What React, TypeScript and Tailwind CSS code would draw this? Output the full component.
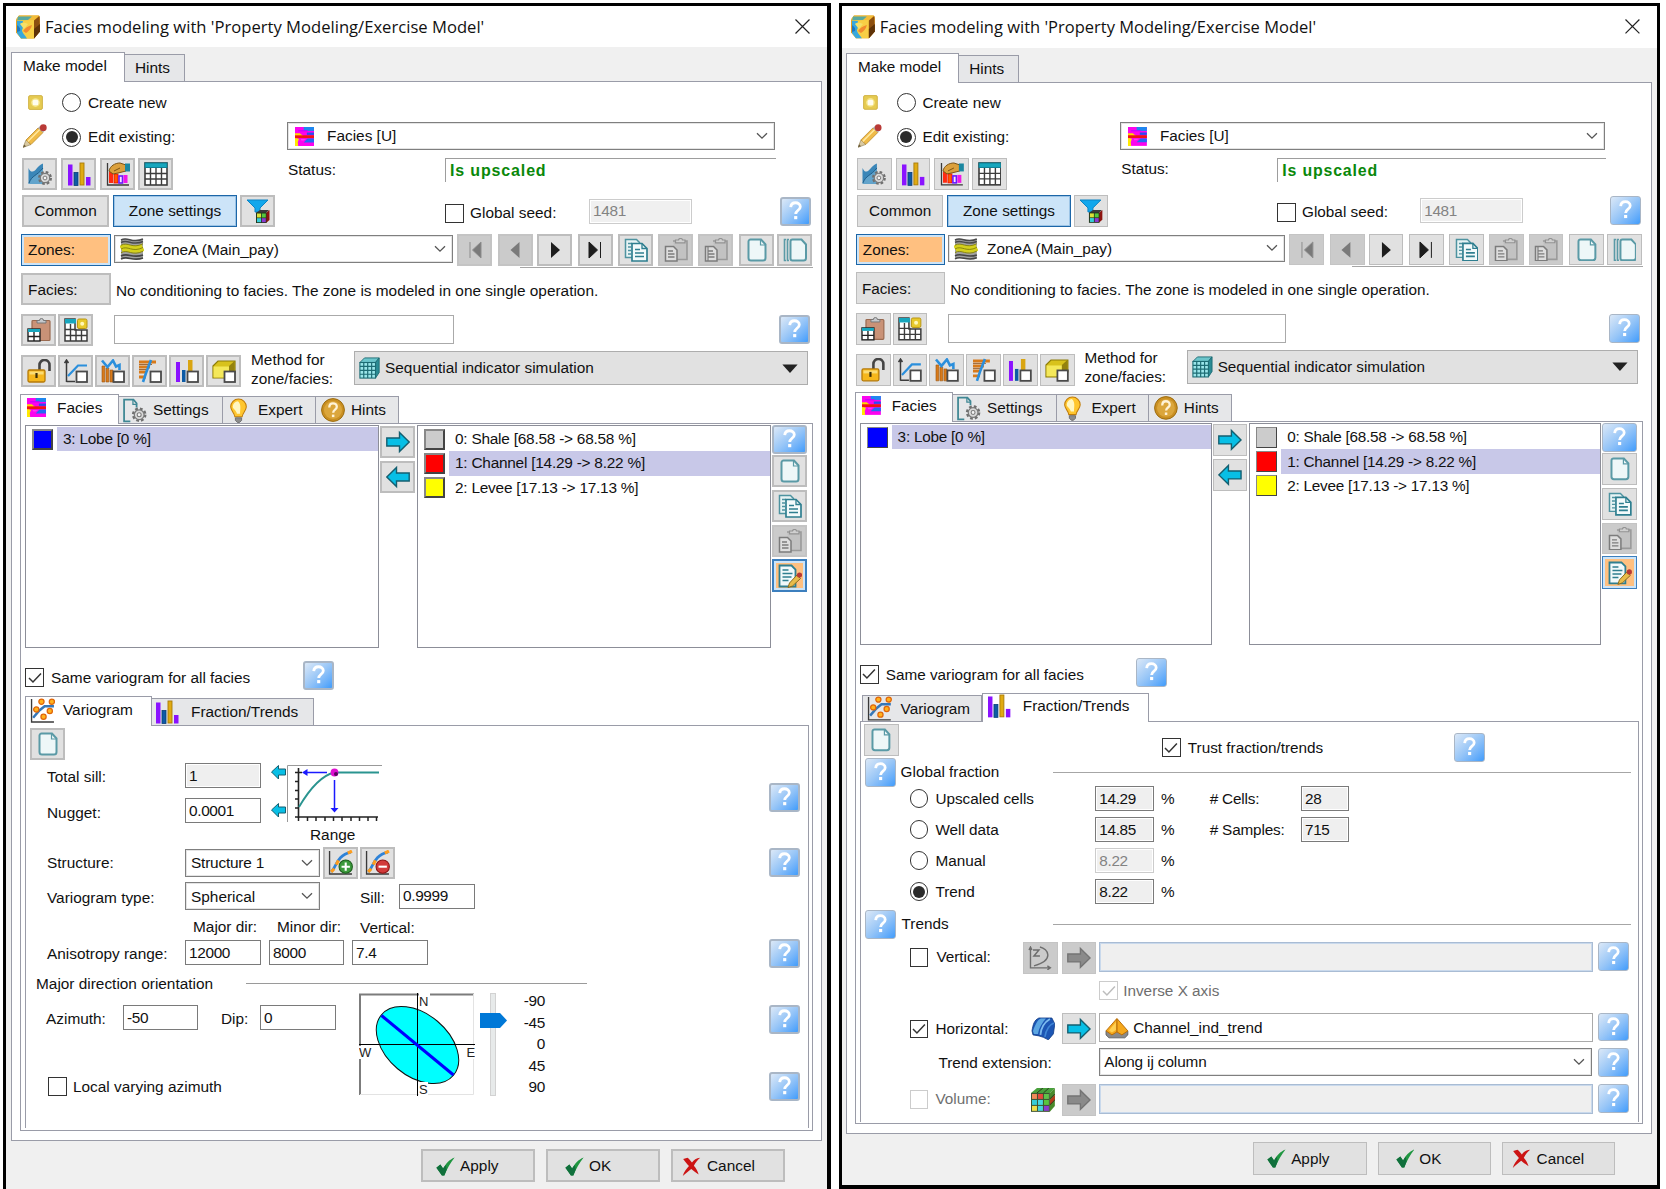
import React from "react";
import type { ReactNode } from "react";

type Kids = { children?: ReactNode; className?: string };

/* ---------- basic controls ---------- */

const Row = ({ children, className = "" }: Kids) => (
  <div className={`flex *:shrink-0 ${className}`}>{children}</div>
);

const Btn = ({ children, className = "", off = false }: Kids & { off?: boolean }) => (
  <button
    className={`flex h-8 w-[35px] items-center justify-center border-2 ${
      off ? "border-[#c4c4c4] bg-[#cbcbcb]" : "border-[#bdbdbd] bg-[#e1e1e1]"
    } ${className}`}
  >
    {children}
  </button>
);

const Help = ({ className = "" }: { className?: string }) => (
  <button
    className={`flex h-[29px] w-[31px] items-center justify-center rounded-[3px] border-2 border-[#a9b6c6] bg-linear-to-br from-[#dbe8f7] via-[#98c6f7] to-[#3f9cfb] ${className}`}
  >
    <svg viewBox="0 0 24 24" className="h-[25px] w-[25px]">
      <path d="M7.4 7.8C7.600 5.2 9.500 3.600 12 3.600s4.600 1.400 4.600 3.800c0 3.400-4.400 3.400-4.400 7" fill="none" stroke="#fff" strokeWidth="2.700" />
      <rect x="10.700" y="16.400" width="3" height="3" fill="#fff" />
    </svg>
  </button>
);

const Chevron = () => (
  <svg viewBox="0 0 12 8" className="h-2 w-3">
    <path d="M1 1.2 6 6.2 11 1.2" fill="none" stroke="#555" strokeWidth="1.3" />
  </svg>
);

const Combo = ({ children, className = "" }: Kids) => (
  <div className={`flex h-7 items-center border border-[#7f7f7f] bg-white pr-[6px] shadow-[inset_0_0_0_1px_#e4e4e4] ${className}`}>
    <div className="flex flex-1 items-center">{children}</div>
    <Chevron />
  </div>
);

const Field = ({ children, className = "", tone = "on" }: Kids & { tone?: "on" | "read" | "off" }) => (
  <div
    className={`flex h-[25px] items-center border pl-[3px] tracking-[-0.35px] ${
      tone === "on"
        ? "border-[#7a7a7a] bg-white"
        : tone === "read"
          ? "border-[#7a7a7a] bg-[#efefef] shadow-[inset_0_0_0_1px_#fff]"
          : "border-[#cccccc] bg-[#f0f0f0] text-[#838383] shadow-[inset_0_0_0_1px_#fff]"
    } ${className}`}
  >
    {children}
  </div>
);

const Check = ({ on = false, off = false, className = "" }: { on?: boolean; off?: boolean; className?: string }) => (
  <span
    className={`flex h-[19px] w-[19px] items-center justify-center border bg-white ${off ? "border-[#cccccc]" : "border-[#333]"} ${className}`}
  >
    {on && (
      <svg viewBox="0 0 16 16" className="h-4 w-4">
        <path d="M2 8 6 12 14 3.6" fill="none" stroke={off ? "#bdbdbd" : "#333"} strokeWidth="1.5" />
      </svg>
    )}
  </span>
);

const Radio = ({ on = false, className = "" }: { on?: boolean; className?: string }) => (
  <span className={`flex h-[19px] w-[19px] items-center justify-center rounded-full border border-[#333] bg-white ${className}`}>
    {on && <span className="h-[12px] w-[12px] rounded-full bg-[#2b2b2b]" />}
  </span>
);

/* ---------- icons ---------- */

const Ico = ({ children, className = "h-6 w-6" }: Kids) => (
  <svg viewBox="0 0 24 24" className={className}>
    {children}
  </svg>
);

const AppIcon = () => (
  <Ico>
    <path d="M0 4.500 3 .5h20l1 2v14l-6 7H5l-5-6Z" fill="#e8a020" />
    <path d="M0 4.500 3 .5h20l-5 5-16 1.500Z" fill="#f2bd3a" />
    <path d="M2 1.500h14l-4 3.500-11 1Z" fill="#58a8a0" />
    <path d="M1 5.500 18 5v18.500H5l-4-5.500Z" fill="#f8cf45" />
    <path d="M1 6h6c-1 4 1 6-1 9 0 3 3 5 5 8.500H5l-4-5.500Z" fill="#38a8dc" />
    <path d="M1 10c2 2 4 3 3 6l-3 1Z" fill="#1f78c0" />
    <path d="M4 9c3-2 5-1 8 0l-4 5Z" fill="#f5e06a" />
    <path d="M7 16c2-3 5-5 9-6-1 4-3 6-6 8Z" fill="#f28a30" />
    <path d="M18 5.500 23.500 1l.5 15.500-6 7Z" fill="#8c4f10" />
    <path d="M18 14l6-5v7.500l-6 7Z" fill="#5e3208" />
  </Ico>
);

const NewStar = () => (
  <Ico className="h-[15px] w-[15px]">
    <rect x="1" y="1" width="22" height="22" rx="2" fill="#e6cb52" stroke="#cfb040" strokeWidth="1.5" />
    <circle cx="12" cy="12" r="7" fill="#f6e68c" />
    <rect x="7.500" y="7.500" width="9" height="9" rx="2.500" fill="#fffdf0" />
  </Ico>
);

const Pencil = () => (
  <Ico>
    <path d="M0 23.500 3 16 8 20.500Z" fill="#d9c9a0" stroke="#8a7a50" strokeWidth=".6" />
    <path d="M0 23.500 1.200 20.500 3 22.300Z" fill="#6a5a38" />
    <path d="M3 16 15 4l5 4.500L8 20.500Z" fill="#f0bb48" stroke="#b98a2c" strokeWidth=".8" />
    <path d="M4.800 17.500 16.800 5.500" stroke="#ffe9a0" strokeWidth="1.500" />
    <path d="M15 4 17 2l5 4.500-2 2Z" fill="#b0a8a8" />
    <circle cx="20.300" cy="3.700" r="3.400" fill="#b93a36" />
  </Ico>
);

const FaciesIcon = () => (
  <Ico className="h-[19px] w-[21px]">
    <rect x="0" y="0" width="24" height="24" fill="#fb04ee" />
    <path d="M11 0h13v5H11Z" fill="#1e86f0" />
    <path d="M4 4h12v1.500H4Z" fill="#c400ff" />
    <path d="M15 7h9v3h-9Z" fill="#2a4cf0" />
    <path d="M0 8h6l4 3v3H5l-5 2Z" fill="#ffd800" />
    <path d="M0 10.500h24v3.500H0Z" fill="#f01414" />
    <path d="M24 14.500v5H11l3-3 2-2Z" fill="#2468f4" />
    <path d="M0 15h5l-1.500 4L4 24H0Z" fill="#ffea00" />
    <path d="M7 15h7l-3 2H8Z" fill="#ff3cf4" />
  </Ico>
);

const GearShape = ({ cx, cy, fill = "#d9d9d9" }: { cx: number; cy: number; fill?: string }) => (
  <>
    <circle cx={cx} cy={cy} r="5.800" fill="none" stroke="#6f6f6f" strokeWidth="2.400" strokeDasharray="2.600 1.955" />
    <circle cx={cx} cy={cy} r="4.700" fill={fill} stroke="#7a7a7a" strokeWidth="1.200" />
    <circle cx={cx} cy={cy} r="1.900" fill="#f4f4f4" stroke="#7a7a7a" strokeWidth="1" />
  </>
);

const SurfaceGear = () => (
  <Ico>
    <path d="M.5 6C2 9 3 10 5 9.500 8 9 9 4 15 1.500V22H.5Z" fill="#3a86b8" />
    <path d="M1 21C4 13 9 14 15 6v16H1Z" fill="#62a4cc" />
    <path d="M1 21C4 13 9 14 15 6" fill="none" stroke="#1d5c88" strokeWidth="1" />
    <GearShape cx={17} cy={16} />
  </Ico>
);

const Bars = ({ className = "h-6 w-6" }: { className?: string }) => (
  <Ico className={className}>
    <rect x="1" y="2.500" width="4.500" height="21" fill="#8a12ff" />
    <rect x="7" y="10.500" width="4" height="13" fill="#0d5ba5" stroke="#0a3c78" strokeWidth=".8" />
    <rect x="13" y="1" width="4" height="22" fill="#e0ab12" stroke="#a87a08" strokeWidth=".9" />
    <rect x="19" y="15" width="4.500" height="8.500" fill="#8a12ff" />
  </Ico>
);

const HandChart = () => (
  <Ico>
    <path d="M1.500 1v22H23" fill="none" stroke="#3a3a3a" strokeWidth="1.300" />
    <path d="M3 10 7 8v13H3Z" fill="#ff2a12" />
    <rect x="8" y="12" width="4" height="9" fill="#ff5a00" stroke="#e00" strokeWidth=".8" />
    <rect x="13" y="14" width="3.500" height="7" fill="#f4ebff" stroke="#6a18ff" strokeWidth="1.600" />
    <rect x="17.500" y="13" width="4" height="8" fill="#f016e8" />
    <path d="M3 9C4 4 9 1 14 1l6 2v6l-8 2-5 1Z" fill="#dba03c" stroke="#7a5214" strokeWidth="1" />
    <path d="M8 9l6-3" stroke="#7a5214" />
    <path d="M19 1.500h5v8h-5Z" fill="#1b87a0" />
  </Ico>
);

const TableIcon = () => (
  <Ico>
    <rect x="1" y="1" width="22" height="22" fill="#fff" stroke="#3c3c3c" strokeWidth="1.600" />
    <rect x="1" y="1" width="22" height="4.500" fill="#17a6bd" stroke="#0d7f94" strokeWidth="1" />
    <path d="M6.500 6v17M12 6v17M17.500 6v17M1 11.500h22M1 17h22" stroke="#3c3c3c" strokeWidth="1.400" />
  </Ico>
);

const Cube = () => (
  <Ico>
    <path d="M0 5 6 0h18l-5 5Z" fill="#49a03c" />
    <path d="M19 5 24 0v18l-5 6Z" fill="#4a8a2c" />
    <path d="M19 12l5-5v5l-5 5.500Z" fill="#b83a1c" />
    <rect x="0" y="5" width="19" height="19" fill="#3c5230" />
    <rect x="1" y="6" width="5" height="5" fill="#ef8a5a" />
    <rect x="7" y="6" width="5" height="5" fill="#e24a3c" />
    <rect x="13" y="6" width="5" height="5" fill="#5fc24a" />
    <rect x="1" y="12" width="5" height="5" fill="#35cdd8" />
    <rect x="7" y="12" width="5" height="5" fill="#48d6de" />
    <rect x="13" y="12" width="5" height="5" fill="#58c440" />
    <rect x="1" y="18" width="5" height="5" fill="#efe04a" />
    <rect x="7" y="18" width="5" height="5" fill="#45d4dc" />
    <rect x="13" y="18" width="5" height="5" fill="#8a3ad0" />
    <path d="M6 5 12 0M12.500 5 18 0M19 11l5-5M19 17l5-5" stroke="#2c3a20" strokeWidth="1" />
  </Ico>
);

const FilterCube = () => (
  <Ico>
    <path d="M1 1h21l-8 8v4h-5V9Z" fill="#12a7ec" stroke="#0b83c4" strokeWidth="1" />
    <path d="M10 14 14 11h9l-3 3Z" fill="#3a3a3a" />
    <path d="M20 14 23.500 11v10L20 24Z" fill="#8d1410" />
    <rect x="10" y="13.500" width="10.500" height="10.500" fill="#23361c" />
    <rect x="11" y="14.500" width="4" height="4" fill="#d9e23a" />
    <rect x="15.800" y="14.500" width="4" height="4" fill="#55c73c" />
    <rect x="11" y="19.200" width="4" height="4" fill="#35cdd8" />
    <rect x="15.800" y="19.200" width="4" height="4" fill="#8a3ad0" />
  </Ico>
);

const ZoneIcon = () => (
  <Ico>
    <path d="M1 3c7-4 11 4 22-1v19c-11 4-15-3-22 1Z" fill="#a0a0a0" />
    <path d="M1 3c7-4 11 4 22-1M1 5.500c7-4 11 4 22-1" fill="none" stroke="#4a4a4a" strokeWidth="1.500" />
    <path d="M1 12c7-4 11 4 22-1.500" fill="none" stroke="#d4d01c" strokeWidth="7" />
    <path d="M1 8.300c7-4 11 4 22-1.500M1 12c7-4 11 4 22-1.500M1 15.700c7-4 11 4 22-1.500" fill="none" stroke="#8a860c" strokeWidth="1" />
    <path d="M1 22c7-4 11 3 22-1M1 19c7-4 11 3 22-1" fill="none" stroke="#444" strokeWidth="1.600" />
  </Ico>
);

const Nav = ({ kind, off = false }: { kind: "first" | "prev" | "next" | "last"; off?: boolean }) => {
  const c = off ? "#7a7a7a" : "#1d1d1d";
  return (
    <Ico>
      {kind === "first" && <path d="M7 4v16M18 4v16L9.500 12Z" fill={c} stroke={off ? "#8d8d8d" : c} strokeWidth="1" />}
      {kind === "prev" && <path d="M15.500 4v16L6.500 12Z" fill={c} />}
      {kind === "next" && <path d="M8 4v16L17 12Z" fill={c} />}
      {kind === "last" && <path d="M5 4v16L13.500 12ZM16.500 4v16" fill={c} stroke={c} strokeWidth="1" />}
    </Ico>
  );
};

const Page = () => (
  <Ico>
    <path d="M3.500 3.500a2 2 0 0 1 2-2H16l4.500 5V20a2.500 2.500 0 0 1-2.500 2.500H6A2.500 2.500 0 0 1 3.500 20Z" fill="#eef7f8" stroke="#5a9aa6" strokeWidth="2" />
    <path d="M15.500 2v5h5" fill="none" stroke="#5a9aa6" strokeWidth="1.200" />
  </Ico>
);
const Pages = () => (
  <Ico>
    <path d="M3 1.500H1.500v21H3M6 1.500H4.500v21H6" fill="none" stroke="#5a9aa6" strokeWidth="1.600" />
    <path d="M7.500 3.500a2 2 0 0 1 2-2h9l4.500 5V20a2.500 2.500 0 0 1-2.500 2.500h-11a2 2 0 0 1-2-2Z" fill="#eef7f8" stroke="#5a9aa6" strokeWidth="2" />
  </Ico>
);
const Copy = () => (
  <Ico>
    <path d="M1.500 1.500h11l3 3v15h-14Z" fill="#e7f3f4" stroke="#4e93a0" strokeWidth="1.500" />
    <path d="M4 5.500h4M4 9h3M4 12.500h3M4 16h3" stroke="#4e93a0" strokeWidth="1.400" />
    <path d="M8 5.500h10l5 5V23H8Z" fill="#f3fafb" stroke="#2f7f90" strokeWidth="1.700" />
    <path d="M18 5.500v5h5" fill="none" stroke="#2f7f90" strokeWidth="1.300" />
    <path d="M11 11.500h5M11 15h9M11 18.500h9" stroke="#2f7f90" strokeWidth="1.600" />
  </Ico>
);
const PasteOff = ({ double = false }: { double?: boolean }) => (
  <Ico>
    <path d="M9 3h14v18.500H13" fill="#c2c2c2" stroke="#9a9a9a" strokeWidth="1.600" />
    <path d="M11.500 4.800V2H14.500a2 1.500 0 0 1 4 0h2.500v2.800Z" fill="#d0d0d0" stroke="#929292" strokeWidth="1.200" />
    <path d="M1.500 8.500h8l3.500 3.500v11H1.500Z" fill="#dedede" stroke="#7c7c7c" strokeWidth="1.500" />
    <path d="M4 13h5M4 16h6.500M4 19h6.500" stroke="#7c7c7c" strokeWidth="1.400" />
    {double && <path d="M4 8.500V23" stroke="#7c7c7c" strokeWidth="1.200" />}
  </Ico>
);
const EditPage = () => (
  <Ico>
    <path d="M1.500 1.500h12l4 4v17h-16Z" fill="#f1f9fa" stroke="#2f7f90" strokeWidth="1.800" />
    <path d="M4.500 6h6M4.500 9.500h10M4.500 13h9M4.500 16.500h6" stroke="#2f7f90" strokeWidth="1.500" />
    <path d="M10 23.500 11.500 19 19 11l3.500 3.500L14.500 22Z" fill="#e8bc4a" stroke="#8a6a1c" strokeWidth="1" />
    <circle cx="21.500" cy="11" r="2.600" fill="#b93a34" />
  </Ico>
);
const PasteTable = () => (
  <Ico>
    <rect x="5" y="2.500" width="18" height="20" rx="1" fill="#c99277" stroke="#9a6a50" strokeWidth="1.200" />
    <path d="M10 5V2.500h2.500a2 2 0 0 1 4 0H19V5Z" fill="#c5c8cc" stroke="#777" strokeWidth="1" />
    <rect x="1" y="11" width="12" height="12" fill="#fff" stroke="#222" strokeWidth="1.400" />
    <rect x="1" y="11" width="12" height="3" fill="#17a6bd" />
    <path d="M7 14v9M1 18.500h12" stroke="#222" strokeWidth="1.400" />
  </Ico>
);
const TableNew = () => (
  <Ico>
    <path d="M1 1h10v11h12v11H1Z" fill="#fff" stroke="#3c3c3c" strokeWidth="1.500" />
    <rect x="1" y="1" width="11" height="4.500" fill="#17a6bd" />
    <path d="M6.500 6v17M12 11v12M17.500 12v11M1 11.500h11M1 17.500h22" stroke="#3c3c3c" strokeWidth="1.400" />
    <rect x="13.500" y="1" width="9.500" height="9.500" rx="1.500" fill="#e8c92c" stroke="#b89614" strokeWidth="1" />
    <circle cx="18.200" cy="5.700" r="2" fill="#fff7b8" />
  </Ico>
);
const Lock = () => (
  <Ico>
    <path d="M12.500 11V6a5 5 0 0 1 10 0v6" fill="none" stroke="#444" strokeWidth="2.600" />
    <rect x="1" y="11" width="17" height="12" rx="1.500" fill="#f6b71c" stroke="#b57a08" strokeWidth="1.300" />
    <rect x="2.500" y="12.500" width="14" height="3" fill="#fbdc74" />
    <path d="M9.500 14v5" stroke="#3a2c08" strokeWidth="2.200" />
  </Ico>
);
const Box = () => <rect x="12.500" y="12.500" width="10.500" height="10.500" fill="#fff" stroke="#4a4a4a" strokeWidth="1.800" />;
const CurveBox = () => (
  <Ico>
    <path d="M2.500 23V2M.5 4 2.500 1 4.500 4M2.500 22.500H11" fill="none" stroke="#3c3c3c" strokeWidth="1.500" />
    <path d="M4 17 14 6.500h9" fill="none" stroke="#2b8fdc" strokeWidth="2.200" />
    <Box />
  </Ico>
);
const HistBox = () => (
  <Ico>
    <path d="M1 7h2.800v16H1zM5 9h2.800v14H5zM9 11h3v12H9z" fill="#d87a1a" stroke="#9c5410" strokeWidth=".6" />
    <path d="M1 1.500 6.500 8 12 1.500 15 7.500 18.500 6v5" fill="none" stroke="#2b8fdc" strokeWidth="2.600" />
    <Box />
  </Ico>
);
const TrendBox = () => (
  <Ico>
    <path d="M1 1.500h17v3H1zM1 6.500h11v3H1zM1 11.500h8v3H1zM1 16.500h7v3H1z" fill="#d87a1a" />
    <path d="M1 5.500h13M1 10.500h9" stroke="#8c4a10" strokeWidth=".8" />
    <path d="M5 23 8 14 13 1" fill="none" stroke="#2b8fdc" strokeWidth="2.600" />
    <Box />
  </Ico>
);
const BarsBox = () => (
  <Ico>
    <rect x="1" y="3" width="4" height="20" fill="#8a12ff" />
    <rect x="7" y="11" width="3.500" height="12" fill="#0d5ba5" />
    <rect x="13" y="1" width="4.500" height="12" fill="#d9a512" />
    <Box />
  </Ico>
);
const VolBox = () => (
  <Ico>
    <path d="M1 7 6 2h17v12l-5 5H1Z" fill="#d8c21c" stroke="#8d7c08" strokeWidth="1.200" />
    <path d="M1.500 7.500h15.500v11H1.500Z" fill="#f4e85a" />
    <path d="M17 7 22.500 2v12l-5.500 5Z" fill="#94820e" />
    <Box />
  </Ico>
);
const SimCube = () => (
  <Ico className="h-[22px] w-[22px]">
    <path d="M1 6 6 1h16l-4 5Z" fill="#6cc5cb" stroke="#1d6c74" />
    <path d="M18 6 22 1v16l-4 6Z" fill="#2b8b94" stroke="#1d6c74" />
    <rect x="1" y="6" width="17" height="17" fill="#9be6ea" stroke="#1d6c74" strokeWidth="1.200" />
    <path d="M5.200 6v17M9.500 6v17M13.800 6v17M1 10.200h17M1 14.500h17M1 18.800h17" stroke="#1d6c74" strokeWidth="1.300" />
  </Ico>
);
const SettingsIcon = () => (
  <Ico className="h-[25px] w-[25px]">
    <path d="M8 22.500H2v-21h9l3 3.500v4" fill="none" stroke="#3f8794" strokeWidth="1.700" />
    <path d="M10.500 1.500V6h4" fill="none" stroke="#3f8794" strokeWidth="1.200" />
    <GearShape cx={16.500} cy={16} />
  </Ico>
);
const Bulb = () => (
  <Ico className="h-[25px] w-[25px]">
    <path d="M12 1a7.500 7.500 0 0 0-7.500 7.500C4.500 12 8 14 8.500 18h7c.5-4 4-6 4-9.500A7.500 7.500 0 0 0 12 1Z" fill="#ffc62e" stroke="#c07c0a" strokeWidth="1" />
    <path d="M11.500 3a5.500 5.500 0 0 0-5 5.500c0 2 3 3 4 6.500h3c0-4 1.500-9-2-12Z" fill="#fff6c2" />
    <path d="M9 19h6v2.500L13 23.500h-2L9 21.500Z" fill="#8c8c8c" stroke="#5c5c5c" strokeWidth=".7" />
  </Ico>
);
const HintIcon = () => (
  <Ico>
    <circle cx="12" cy="12" r="11.400" fill="#c98f22" stroke="#9c6c10" strokeWidth="1" />
    <circle cx="12" cy="12" r="9" fill="#dba63c" />
    <path d="M8.300 9.500C8.300 6.800 10 5.300 12 5.300s3.800 1.300 3.800 3.500c0 2.900-3.600 2.700-3.600 5.900" fill="none" stroke="#fff3d8" strokeWidth="2.300" />
    <rect x="10.900" y="16.600" width="2.500" height="2.500" fill="#fff3d8" />
  </Ico>
);
const Arrow = ({ left = false, off = false }: { left?: boolean; off?: boolean }) => (
  <Ico>
    <path
      d={left ? "M.8 12 10.500 2.500V8h12.700v8H10.500v5.500Z" : "M23.200 12 13.500 2.500V8H.8v8h12.700v5.500Z"}
      fill={off ? "#8a8a8a" : "#08bfe6"}
      stroke={off ? "#747474" : "#145f70"}
      strokeWidth="1.400"
    />
  </Ico>
);
const VarioIcon = () => (
  <Ico className="h-[25px] w-[25px]">
    <path d="M1.500 1v22H23" fill="none" stroke="#3a3a3a" strokeWidth="1.300" />
    <path d="M3 19 9 12 14 8h9" fill="none" stroke="#3577b8" strokeWidth="2.400" />
    {[
      [11, 3.500],
      [21, 3.500],
      [6, 11],
      [19, 12.500],
      [13, 18],
    ].map(([x, y]) => (
      <circle key={`${x}-${y}`} cx={x} cy={y} r="2.500" fill="#ffb21c" stroke="#e0650a" strokeWidth="1.200" />
    ))}
  </Ico>
);
const StructIcon = ({ minus = false }: { minus?: boolean }) => (
  <Ico className="h-[25px] w-[25px]">
    <path d="M1.500 1v22H23" fill="none" stroke="#3a3a3a" strokeWidth="1.300" />
    <path d="M3 21C8 17 8 5 22 2" fill="none" stroke="#2f83d8" strokeWidth="2.600" />
    <path d="M3 21l3-3M8 14l2-4M19 3l4-2" stroke="#ff9d1c" strokeWidth="3" />
    <circle cx="17" cy="16" r="6.400" fill={minus ? "#d23a3a" : "#3c9a3c"} stroke={minus ? "#8c1414" : "#1c5c1c"} strokeWidth="1" />
    <path d={minus ? "M13 16h8" : "M13 16h8M17 12v8"} stroke="#fff" strokeWidth="2" />
  </Ico>
);
const ZCurve = () => (
  <Ico>
    <path d="M2.500 2v20H22M19.500 20l3 2-3 2M1 4l1.500-3L4 4" fill="none" stroke="#6e6e6e" strokeWidth="1.400" />
    <path d="M5 4h6L6 10h6" fill="none" stroke="#6e6e6e" strokeWidth="1.500" />
    <path d="M12 1c4 1 8 4 8 8 0 5-7 9-14 11" fill="none" stroke="#6e6e6e" strokeWidth="1.400" />
  </Ico>
);
const SurfBlue = () => (
  <Ico>
    <path d="M1 14C2 8 3 3 8 1h13l3 6-1.500 10-5 6-5-2.500L8 19l-6-1Z" fill="#1c56b4" stroke="#123c84" strokeWidth=".8" />
    <path d="M2 14C4 9 6 3 10 1.500h5C11 6 8 11 7 17l-4 0Z" fill="#5ca6e2" />
    <path d="M9.500 18C10 11 14 5 19 2" fill="none" stroke="#7ebcf0" strokeWidth="1.800" />
    <path d="M14 20C15 14 18 8 23 6" fill="none" stroke="#3f86d6" strokeWidth="1.600" />
  </Ico>
);
const TrendCone = () => (
  <Ico>
    <path d="M1 15h22v4l-3 3H4l-3-3Z" fill="#8a8a8a" stroke="#555" strokeWidth=".8" />
    <path d="M12 2.500 1 15l6 4 5-3 5 3 6-4Z" fill="#f5a81c" stroke="#b86e08" strokeWidth="1" />
    <path d="M12 3v13" stroke="#b86e08" strokeWidth="1.200" />
    <path d="M11 6 4 14.500l3 2 4-2.500Z" fill="#ffd052" />
  </Ico>
);
const Tick = () => (
  <Ico className="h-[19px] w-[19px]">
    <path d="M.5 13.500 5.500 9.500 9 14.500C12 8.500 17 3 23.500.5 18.500 7 14 14.500 10.500 23.500H7.500Z" fill="#1f9640" />
    <path d="M.5 13.500 5.500 9.500 9 14.500c1-1.500 2-3 3.500-4.500l1 6-3 7.500H7.500Z" fill="#106f3c" />
  </Ico>
);
const Cross = () => (
  <Ico className="h-[19px] w-[19px]">
    <path d="M1.500 2.500 7 1c2.300 1.800 3.800 3.800 5.600 6C15 3.500 18 1.500 23 1c-3.500 3-6 6.500-8 10 3 3.500 5 7 6 11-3.500-2.500-6.500-4.500-9.300-7C8.500 17.500 5 20.500 1 24 2.500 19 5.500 15 8.800 11.500 6.300 8.500 4 6 1.500 2.500Z" fill="#cc1414" />
  </Ico>
);

/* ---------- shared blocks ---------- */

const Tab = ({ on = false, className = "", children }: Kids & { on?: boolean }) => (
  <div
    className={`flex items-center border border-b-0 border-[#9a9ca8] ${
      on ? "relative z-10 -mb-px h-[30px] bg-white" : "-ml-px h-[27px] bg-[#e6e7e9]"
    } ${className}`}
  >
    {children}
  </div>
);

const Swatch = ({ className }: { className: string }) => (
  <span className={`h-[21px] w-[21px] border-2 border-t-[#888] border-l-[#888] border-r-[#444] border-b-[#444] ${className}`} />
);

const Item = ({ children, color, on = false }: { children: ReactNode; color: string; on?: boolean }) => (
  <Row className="h-[24.3px] items-center">
    <Swatch className={color} />
    <span className={`ml-1 flex h-full w-[321px] items-center pl-[6px] tracking-[-0.23px] ${on ? "bg-[#c8c8e8]" : ""}`}>{children}</span>
  </Row>
);

const VariogramPanel = () => (
  <div className="ml-1 h-[403px] w-[784px] border border-b-0 border-[#9a9ca8]">
    <Row className="pt-[2px] pl-1">
      <Btn>
        <Page />
      </Btn>
    </Row>
    <Row>
      <div className="w-[743px]">
        <Row className="h-16">
          <div className="w-[159px] pl-[21px]">
            <div className="flex h-[33px] items-center">Total sill:</div>
            <div className="flex h-10 items-center">Nugget:</div>
          </div>
          <div className="w-[76px] pt-[3px]">
            <Field tone="read">1</Field>
            <Field className="mt-[10px]">0.0001</Field>
          </div>
          <svg viewBox="270 763 114 60" className="mt-[3px] ml-[9px] h-[60px] w-[114px]">
            <path d="M287.500 822V765.500H382" fill="none" stroke="#999" />
            <path d="M298.500 768v50M295 817h83M295 772.500h7M295 781.500h4M295 790.500h4M295 799h4M295 808h4" stroke="#222" strokeWidth="1.600" />
            <path d="M307.500 817v4M316 817v4M325 817v4M333.500 817v4M342 817v4M351 817v4M359.500 817v4M368 817v4M376.500 817v4M298.500 817v4" stroke="#222" strokeWidth="1.500" />
            <path d="M299 807C309 790 320 776 334 772.500H379" fill="none" stroke="#2a9490" strokeWidth="1.900" />
            <path d="M327 772.500H305M334.500 780v28" stroke="#1a1aff" strokeWidth="1.500" />
            <path d="M302 772.500 307.500 769v7ZM334.500 812.500 330.500 808h8Z" fill="#1a1aff" />
            <circle cx="334.500" cy="772.500" r="3.900" fill="#e010d0" />
            <circle cx="336" cy="774" r="2" fill="#5a0460" />
            <path d="M271.500 772 278.500 765.500v3.500h7v6h-7v4ZM271.500 810 278.500 803.500v3.500h7v6h-7v4Z" fill="#08bfe6" stroke="#145f70" />
          </svg>
        </Row>
        <div className="flex h-[22px] items-center pl-[284px]">Range</div>
        <Row className="h-[33px] items-center">
          <span className="w-[159px] pl-[21px]">Structure:</span>
          <Combo className="w-[135px] pl-[5px] tracking-[-0.2px]">Structure 1</Combo>
          <Btn className="ml-[3px]">
            <StructIcon />
          </Btn>
          <Btn className="ml-[2px]">
            <StructIcon minus />
          </Btn>
        </Row>
        <Row className="mt-[3px] h-7 items-center">
          <span className="w-[159px] pt-[3px] pl-[21px]">Variogram type:</span>
          <Combo className="w-[135px] pl-[5px]">
            <span className="pt-px">Spherical</span>
          </Combo>
          <span className="ml-[40px] w-[39px] pt-[3px]">Sill:</span>
          <Field className="w-[76px]">0.9999</Field>
        </Row>
        <Row className="mt-[5px] h-6 items-center">
          <span className="ml-[167px] w-[84px]">Major dir:</span>
          <span className="w-[83px]">Minor dir:</span>
          <span className="pt-[2px]">Vertical:</span>
        </Row>
        <Row className="mt-px h-[25px] items-center">
          <span className="w-[159px] pt-[2px] pl-[21px]">Anisotropy range:</span>
          <Field className="w-[76px]">12000</Field>
          <Field className="ml-[8px] w-[75px]">8000</Field>
          <Field className="ml-[8px] w-[76px]">7.4</Field>
        </Row>
        <Row className="mt-[9px] h-[19px] items-center">
          <span className="ml-[10px] w-[210px] pt-px">Major direction orientation</span>
          <span className="h-px w-[341px] bg-[#9a9a9a]" />
        </Row>
        <Row className="h-[104px]">
          <div className="w-[333px]">
            <Row className="mt-[12px] h-[25px] items-center">
              <span className="ml-[20px] w-[77px] pt-[2px]">Azimuth:</span>
              <Field className="w-[75px]">-50</Field>
              <span className="ml-[23px] w-[39px] pt-[2px]">Dip:</span>
              <Field className="w-[76px]">0</Field>
            </Row>
            <Row className="mt-[47px] h-[19px] items-center">
              <Check className="ml-[22px]" />
              <span className="ml-[6px] pt-px">Local varying azimuth</span>
            </Row>
          </div>
          <svg viewBox="359 993 116 103" className="h-[103px] w-[116px]">
            <path d="M360 1095V994.500H474" fill="none" stroke="#7c7c7c" strokeWidth="2" />
            <path d="M360 1094.500H473.500V994" fill="none" stroke="#e3e3e3" />
            <ellipse cx="417.500" cy="1045" rx="47" ry="31" transform="rotate(40 417.500 1045)" fill="#00ffff" stroke="#111" />
            <path d="M417.500 993v103M359 1044.500h116" stroke="#000" />
            <path d="M381.500 1015.500 453.500 1075" stroke="#0000ff" strokeWidth="3" />
            <path d="M419 993h11v13h-11zM359 1046h12v13h-12zM466 1046h9v13h-9zM419 1082h9v13h-9z" fill="#fff" />
            <g fontSize="13" fontFamily="Liberation Sans, Arial, sans-serif" fill="#222">
              <text x="419" y="1006">N</text>
              <text x="359" y="1057">W</text>
              <text x="466.500" y="1057">E</text>
              <text x="419" y="1094">S</text>
            </g>
          </svg>
          <svg viewBox="480 993 27 103" className="ml-[5px] h-[103px] w-[27px]">
            <rect x="490.500" y="993.500" width="5" height="102" fill="#e7eaea" stroke="#d2d2d2" />
            <path d="M480 1013h20l7 7.500-7 7.500h-20Z" fill="#0078d7" />
          </svg>
          <div className="-mt-[3px] w-[38px] text-right tracking-[-0.3px]">
            {["-90", "-45", "0", "45", "90"].map((t) => (
              <div key={t} className="h-[21.5px] leading-[21.5px]">
                {t}
              </div>
            ))}
          </div>
        </Row>
      </div>
      <div className="w-[31px]">
        <Help className="mt-[23px]" />
        <Help className="mt-[36px]" />
        <Help className="mt-[62px]" />
        <Help className="mt-[37px]" />
        <Help className="mt-[38px]" />
      </div>
    </Row>
  </div>
);

const Fraction = ({ label, value, on, off, extra }: { label: string; value: string; on?: boolean; off?: boolean; extra?: [string, string] }) => (
  <Row className="h-[31.3px] items-center">
    <Radio on={on} className="ml-[49px]" />
    <span className="ml-[7px] w-[161px]">{label}</span>
    <Field tone={off ? "off" : "read"} className="w-[59px]">
      {value}
    </Field>
    <span className="ml-[7px] w-[49px]">%</span>
    {extra && (
      <>
        <span className="w-[92px] tracking-[-0.15px]">{extra[0]}</span>
        <Field tone="read" className="w-[48px]">
          {extra[1]}
        </Field>
      </>
    )}
  </Row>
);

const blueField = "h-[30px] w-[497px] border border-[#a9bcd4] bg-[#efefef] shadow-[inset_0_0_0_1px_#c9d9ec]";

const TrendsPanel = () => (
  <div className="ml-1 h-[403px] w-[784px] border border-b-0 border-[#9a9ca8]">
    <Row className="h-[34px] pt-[2px]">
      <Btn className="ml-[3px]">
        <Page />
      </Btn>
      <Check on className="mt-[14px] ml-[265px]" />
      <span className="mt-[13px] ml-[7px] w-[268px]">Trust fraction/trends</span>
      <Help className="mt-[9px]" />
    </Row>
    <Row className="mt-[2px] h-[25px]">
      <Help className="ml-1" />
      <span className="ml-[5px] w-[153px] pt-[3px]">Global fraction</span>
      <span className="mt-[14px] h-px w-[582px] bg-[#a6a6a6]" />
    </Row>
    <Fraction label="Upscaled cells" value="14.29" extra={["# Cells:", "28"]} />
    <Fraction label="Well data" value="14.85" extra={["# Samples:", "715"]} />
    <Fraction label="Manual" value="8.22" off />
    <Fraction label="Trend" value="8.22" on />
    <Row className="mt-[3px] h-[29px]">
      <Help className="ml-1" />
      <span className="ml-[6px] w-[152px] pt-[3px]">Trends</span>
      <span className="mt-[14px] h-px w-[582px] bg-[#a6a6a6]" />
    </Row>
    <Row className="mt-[3px] h-8">
      <Check className="mt-[6px] ml-[49px]" />
      <span className="mt-[4px] ml-2 w-[87px]">Vertical:</span>
      <Btn off>
        <ZCurve />
      </Btn>
      <Btn off className="ml-1">
        <Arrow off />
      </Btn>
      <div className={`ml-[3px] ${blueField}`} />
      <Help className="ml-[5px]" />
    </Row>
    <Row className="h-[34px] items-center text-[#6e6e6e]">
      <Check on off className="ml-[240px]" />
      <span className="ml-[5px]">Inverse X axis</span>
    </Row>
    <Row className="mt-[5px] h-8">
      <Check on className="mt-[7px] ml-[49px]" />
      <span className="mt-[5px] ml-[7px] w-[88px]">Horizontal:</span>
      <span className="flex w-[39px] items-center pl-[8px]">
        <SurfBlue />
      </span>
      <Btn>
        <Arrow />
      </Btn>
      <div className="ml-[3px] flex h-[30px] w-[497px] items-center border border-[#aaaaaa] bg-white pl-[5px]">
        <TrendCone />
        <span className="ml-[4px] pt-px">Channel_ind_trend</span>
      </div>
      <Help className="ml-[5px]" />
    </Row>
    <Row className="mt-1 h-[29px]">
      <span className="mt-[4px] ml-[78px] w-[162px]">Trend extension:</span>
      <Combo className="w-[496px] pl-1 tracking-[-0.1px]">Along ij column</Combo>
      <Help className="ml-[6px]" />
    </Row>
    <Row className="mt-[7px] h-8">
      <Check off className="mt-[6px] ml-[49px]" />
      <span className="mt-[4px] ml-[7px] w-[88px] text-[#6e6e6e]">Volume:</span>
      <span className="flex w-[39px] items-center pl-[8px]">
        <Cube />
      </span>
      <Btn off>
        <Arrow off />
      </Btn>
      <div className={`ml-[3px] ${blueField}`} />
      <Help className="ml-[5px]" />
    </Row>
  </div>
);

const Dialog = ({ second = false }: { second?: boolean }) => (
  <div className={second ? "[zoom:0.9938]" : ""}>
    <Row className={`items-center bg-white ${second ? "h-[42px] pl-[9px]" : "h-[41px] pl-[10px]"}`}>
      <AppIcon />
      <span className="ml-[5px] w-[750px] font-['Open_Sans','Noto_Sans',sans-serif] text-[16.6px] tracking-[0.01px] text-[#111]">
        Facies modeling with &#39;Property Modeling/Exercise Model&#39;
      </span>
      <svg viewBox="0 0 15 15" className="h-[15px] w-[15px]">
        <path d="M.5.5l14 14M14.500.5l-14 14" stroke="#222" strokeWidth="1.200" />
      </svg>
    </Row>
    <div className={second ? "pl-[4px]" : "pl-[5px]"}>
      <Row className="h-[34px] items-end pt-[5px]">
        <Tab on className="w-[114px] pb-[3px] pl-[11px]">
          Make model
        </Tab>
        <Tab className="w-[61px] pl-[10px]">Hints</Tab>
      </Row>
      <div className={`w-[811px] border border-[#9a9ca8] bg-white ${second ? "h-[1059px]" : "h-[1060px]"}`}>
        <Row className="h-10 items-center">
          <span className="ml-4">
            <NewStar />
          </span>
          <Radio className="ml-[19px]" />
          <span className="ml-[7px] pt-px">Create new</span>
        </Row>
        <Row className="h-7 items-center">
          <span className="ml-[11px]">
            <Pencil />
          </span>
          <Radio on className="mt-[2px] ml-[15px]" />
          <span className="ml-[7px] w-[199px] pt-[2px]">Edit existing:</span>
          <Combo className="w-[488px] pl-[6px]">
            <FaciesIcon />
            <span className="ml-[12px]">Facies [U]</span>
          </Combo>
        </Row>
        <Row className="mt-2 h-8">
          <Btn className="ml-[10px]">
            <SurfaceGear />
          </Btn>
          <Btn className="ml-[4px]">
            <Bars />
          </Btn>
          <Btn className="ml-[4px]">
            <HandChart />
          </Btn>
          <Btn className="ml-[3px]">
            <TableIcon />
          </Btn>
          <span className="ml-[115px] w-[157px] leading-[23px]">Status:</span>
          <span className="flex h-[24px] w-[331px] items-center border-t border-l border-[#9d9d9d] pl-1 text-[16px] font-bold tracking-[0.85px] text-[#0a880a]">
            Is upscaled
          </span>
        </Row>
        <Row className="mt-[5px] h-8 items-center">
          <Btn className="ml-[10px] w-[87px]">Common</Btn>
          <button className="ml-1 h-8 w-[124px] border border-[#1c66a8] bg-[#cce4f8] shadow-[inset_0_0_0_1px_#9cc4e6]">Zone settings</button>
          <Btn className="ml-[3px]">
            <FilterCube />
          </Btn>
          <Check className="mt-[4px] ml-[170px]" />
          <span className="mt-[3px] ml-[6px] w-[119px]">Global seed:</span>
          <Field tone="off" className="w-[103px]">
            1481
          </Field>
          <Help className="ml-[88px]" />
        </Row>
        <Row className="mt-[7px] h-8">
          <button className="ml-[9px] h-8 w-[90px] border border-[#1c66a8] bg-[#ffc080] pl-[6px] text-left shadow-[inset_0_0_0_2px_#cce4f8]">Zones:</button>
          <Combo className="mt-px ml-[3px] w-[339px] pl-[5px]">
            <ZoneIcon />
            <span className="ml-[9px] pt-px">ZoneA (Main_pay)</span>
          </Combo>
          <Btn off className="ml-1">
            <Nav kind="first" off />
          </Btn>
          <Btn off className="ml-[6px]">
            <Nav kind="prev" off />
          </Btn>
          <Btn className="ml-1">
            <Nav kind="next" />
          </Btn>
          <Btn className="ml-[6px]">
            <Nav kind="last" />
          </Btn>
          <Btn className="ml-[5px]">
            <Copy />
          </Btn>
          <Btn off className="ml-[5px]">
            <PasteOff />
          </Btn>
          <Btn off className="ml-[5px]">
            <PasteOff double />
          </Btn>
          <Btn className="ml-[6px]">
            <Page />
          </Btn>
          <Btn className="ml-[3px]">
            <Pages />
          </Btn>
        </Row>
        <div className="mt-px ml-[508px] h-px w-[293px] bg-[#a6a6a6]" />
        <Row className="mt-[5px] h-8 items-center">
          <Btn className="ml-[9px] w-[90px] justify-start pt-[2px] pl-[5px]">Facies:</Btn>
          <span className="ml-[5px] pt-[3px]">No conditioning to facies. The zone is modeled in one single operation.</span>
        </Row>
        <Row className="mt-[9px] h-8">
          <Btn className="ml-[9px]">
            <PasteTable />
          </Btn>
          <Btn className="ml-[2px]">
            <TableNew />
          </Btn>
          <div className="mt-px ml-[21px] h-[29px] w-[340px] border border-[#aaaaaa]" />
          <Help className="mt-px ml-[325px]" />
        </Row>
        <Row className="mt-[5px] h-9">
          <Row className="ml-[9px] w-[230px] items-end gap-[2px]">
            <Btn>
              <Lock />
            </Btn>
            <Btn>
              <CurveBox />
            </Btn>
            <Btn>
              <HistBox />
            </Btn>
            <Btn>
              <TrendBox />
            </Btn>
            <Btn>
              <BarsBox />
            </Btn>
            <Btn>
              <VolBox />
            </Btn>
          </Row>
          <span className="-mt-px w-[103px] leading-[19px]">
            Method for
            <br />
            zone/facies:
          </span>
          <button className="flex h-[34px] w-[454px] items-center border border-[#adadad] bg-[#e1e1e1] pr-[9px] pl-1">
            <SimCube />
            <span className="ml-1 flex-1 text-left">Sequential indicator simulation</span>
            <svg viewBox="0 0 17 10" className="h-[9px] w-[16px]">
              <path d="M0 .5h17L8.500 10Z" fill="#222" />
            </svg>
          </button>
        </Row>

        <Row className="mt-[7px] ml-2 h-[29px] items-end">
          <Tab on className="w-[99px] pb-1 pl-[5px]">
            <FaciesIcon />
            <span className="ml-[10px]">Facies</span>
          </Tab>
          <Tab className="w-[105px] pl-[3px]">
            <SettingsIcon />
            <span className="ml-[6px]">Settings</span>
          </Tab>
          <Tab className="w-[94px] pl-[3px]">
            <Bulb />
            <span className="ml-[7px]">Expert</span>
          </Tab>
          <Tab className="w-[84px] pl-[5px]">
            <HintIcon />
            <span className="ml-[6px]">Hints</span>
          </Tab>
        </Row>
        <div className={`ml-2 w-[793px] border border-[#9a9ca8] pt-px ${second ? "h-[707px]" : "h-[708px]"}`}>
          <Row className="h-[222px]">
            <div className="ml-1 h-[223px] w-[354px] border border-[#8c8e98] pt-px pl-[6px]">
              <Item color="bg-[#0000ff]" on>
                3: Lobe [0 %]
              </Item>
            </div>
            <div className="ml-px w-[35px] pt-px">
              <Btn>
                <Arrow />
              </Btn>
              <Btn className="mt-[3px]">
                <Arrow left />
              </Btn>
            </div>
            <div className="ml-[2px] h-[223px] w-[354px] border border-[#8c8e98] pt-px pl-[6px]">
              <Item color="bg-[#cccccc]">0: Shale [68.58 -&gt; 68.58 %]</Item>
              <Item color="bg-[#ff0000]" on>
                1: Channel [14.29 -&gt; 8.22 %]
              </Item>
              <Item color="bg-[#ffff00]">2: Levee [17.13 -&gt; 17.13 %]</Item>
            </div>
            <div className="ml-px w-[35px]">
              <Help className="w-[35px]" />
              <Btn className="mt-px">
                <Page />
              </Btn>
              <Btn className="mt-[3px]">
                <Copy />
              </Btn>
              <Btn off className="mt-[3px]">
                <PasteOff />
              </Btn>
              <button className="mt-[2px] flex h-[33px] w-[35px] items-center justify-center border-2 border-[#3c7fbe] bg-[#ffc080] shadow-[inset_0_0_0_2px_#cce4f8]">
                <EditPage />
              </button>
            </div>
          </Row>
          <Row className="mt-[14px] h-[29px]">
            <Check on className="mt-[7px] ml-1" />
            <span className="mt-[6px] ml-[7px] w-[252px]">Same variogram for all facies</span>
            <Help />
          </Row>
          {second ? (
            <>
              <Row className="mt-[6px] ml-[6px] h-[29px] items-end">
                <Tab className="ml-0 w-[121px] pl-[4px]">
                  <VarioIcon />
                  <span className="ml-[9px]">Variogram</span>
                </Tab>
                <Tab on className="w-[168px] pb-[4px] pl-[4px]">
                  <Bars />
                  <span className="ml-[12px]">Fraction/Trends</span>
                </Tab>
              </Row>
              <TrendsPanel />
            </>
          ) : (
            <>
              <Row className="mt-[6px] ml-1 h-[29px] items-end">
                <Tab on className="w-[127px] pb-[3px] pl-[4px]">
                  <VarioIcon />
                  <span className="ml-[8px]">Variogram</span>
                </Tab>
                <Tab className="w-[163px] pl-[3px]">
                  <Bars />
                  <span className="ml-[12px]">Fraction/Trends</span>
                </Tab>
              </Row>
              <VariogramPanel />
            </>
          )}
        </div>
      </div>
      <Row className="mt-2 pl-[410px]">
        <Btn className="h-[33px] w-[114px] justify-start pt-px pl-[13px]">
          <Tick />
          <span className="ml-[5px]">Apply</span>
        </Btn>
        <Btn className="ml-[11px] h-[33px] w-[114px] justify-start pt-px pl-[17px]">
          <Tick />
          <span className="ml-[5px]">OK</span>
        </Btn>
        <Btn className="ml-[11px] h-[33px] w-[114px] justify-start pt-px pl-[9px]">
          <Cross />
          <span className="ml-[6px]">Cancel</span>
        </Btn>
      </Row>
    </div>
  </div>
);

export default function App() {
  return (
    <div className="flex h-[1189px] w-[1666px] overflow-hidden bg-white pt-[3px] pl-[3px] font-['Liberation_Sans',Arial,sans-serif] text-[15.400px] leading-[22px] whitespace-nowrap text-[#111]">
      <div className="h-[1190px] w-[828px] shrink-0 overflow-hidden border-[3px] border-r-4 border-black bg-[#f0f0f0]">
        <Dialog />
      </div>
      <div className="ml-2 h-[1186px] w-[821px] shrink-0 overflow-hidden border-[3px] border-b-4 border-black bg-[#f0f0f0]">
        <Dialog second />
      </div>
    </div>
  );
}
